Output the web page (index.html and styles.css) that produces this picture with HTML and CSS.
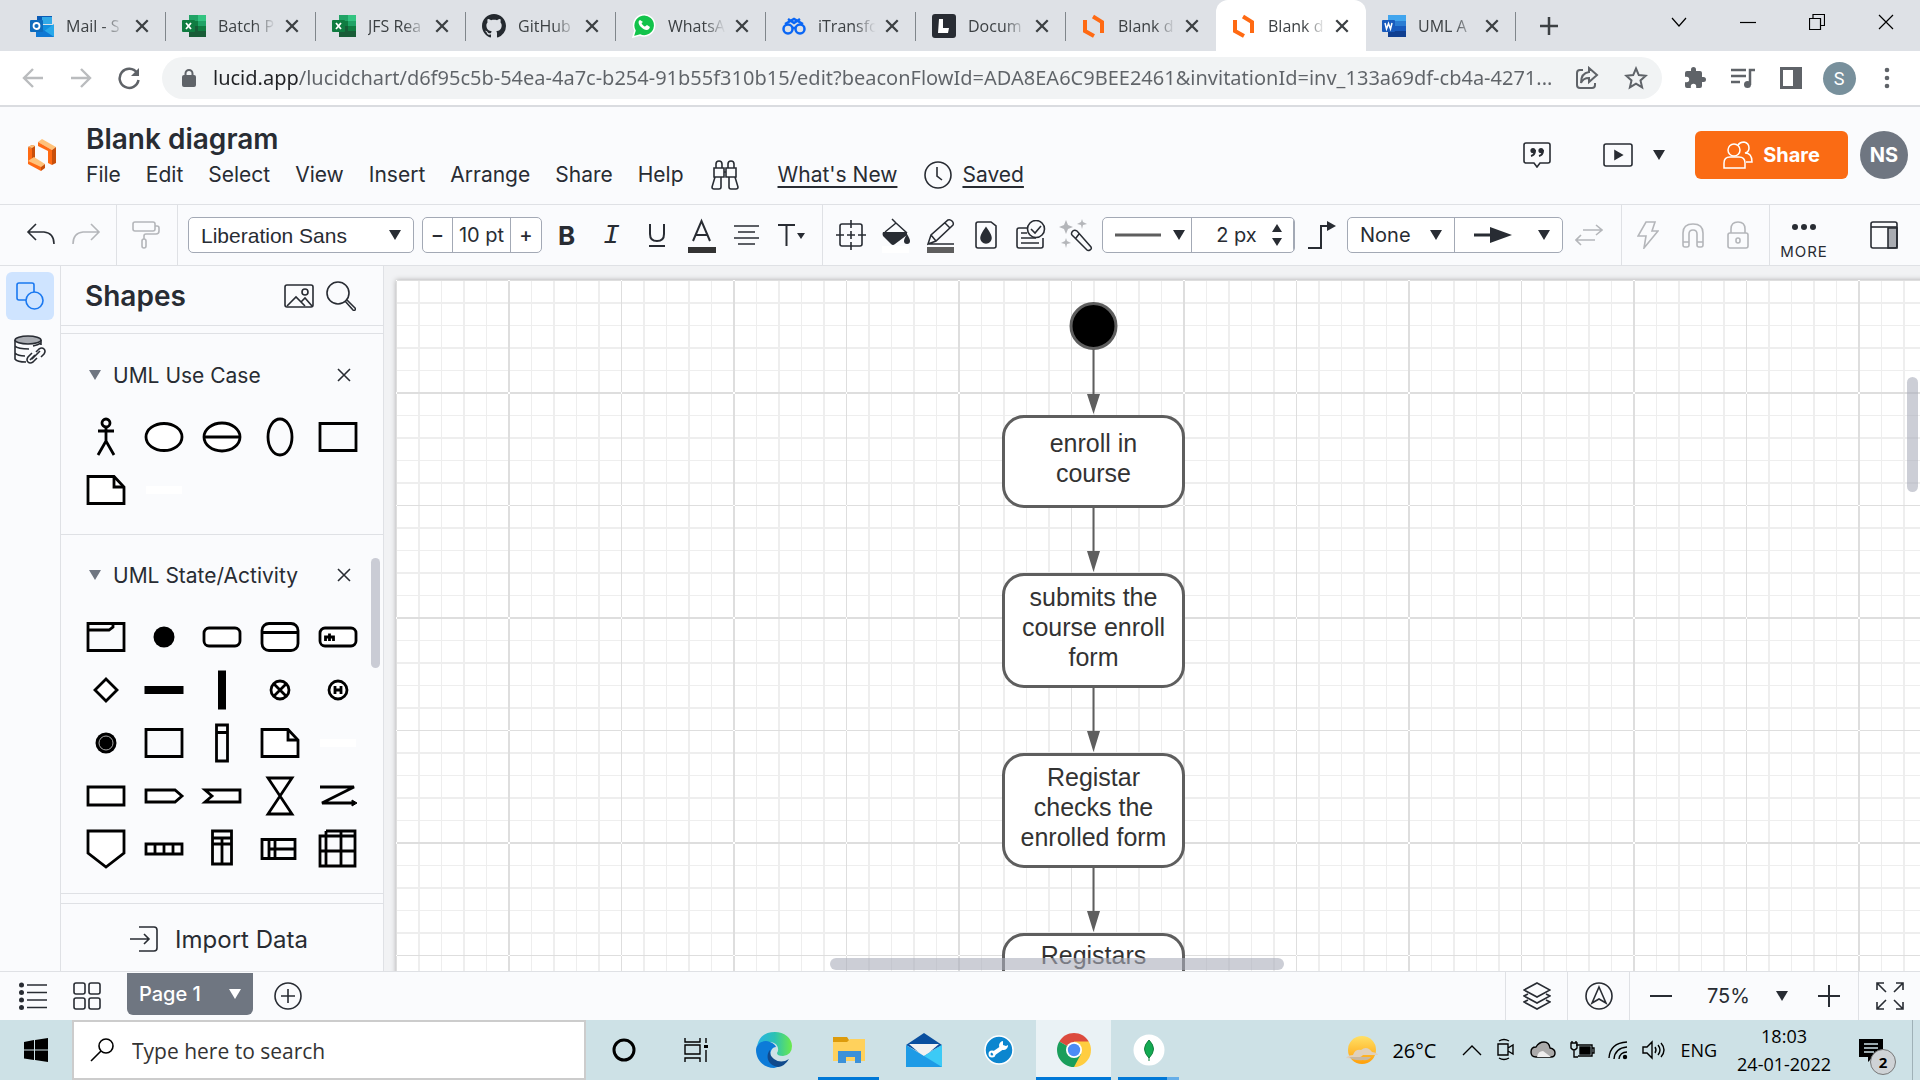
FILE: index.html
```html
<!DOCTYPE html>
<html lang="en">
<head>
<meta charset="utf-8">
<title>Blank diagram: Lucidchart</title>
<link rel="stylesheet" href="styles.css">
</head>
<body>
<svg class="defs" aria-hidden="true">
  <symbol id="x" viewBox="0 0 14 14"><path d="M2 2l10 10M12 2L2 12" fill="none" stroke="currentColor" stroke-width="2"/></symbol>
  <symbol id="caret" viewBox="0 0 12 10"><path d="M0 0h12L6 10z" fill="currentColor"/></symbol>
  <symbol id="excel" viewBox="0 0 24 24"><path d="M7 1h9v6H7z" fill="#21a366"/><path d="M16 1h8v6h-8z" fill="#33c481"/><path d="M7 7h9v5H7z" fill="#107c41"/><path d="M16 7h8v5h-8z" fill="#21a366"/><path d="M7 12h9v11H7z" fill="#185c37"/><path d="M16 12h8v5h-8z" fill="#107c41"/><path d="M16 17h8v6h-8z" fill="#185c37"/><rect y="6" width="13" height="12" rx="1" fill="#107c41"/><path d="M4 9l5 6M9 9l-5 6" stroke="#fff" stroke-width="1.8"/></symbol>
  <symbol id="lucid" viewBox="0 0 24 24"><path d="M3 6v11l9 5M11 2.500l9 5.500v11" fill="none" stroke="#ff6a13" stroke-width="4"/></symbol>
  <symbol id="note" viewBox="-22 -22 44 44"><path d="M-18-13.500H8L18-3v16.500h-36z" fill="#fff"/><path d="M8-13.500V-3h10"/></symbol>
</svg>

<header class="tabs">
  <a class="tab first" href="#"><svg viewBox="0 0 24 24"><path d="M7 2h15v8H7z" fill="#0a5bb5"/><path d="M12 3h10v7H12z" fill="#32a9e7"/><path d="M6 11h18v12H6z" fill="#1490df"/><path d="M24 10L13 18l11 5z" fill="#28a8ea"/><path d="M6 11l18 12H6z" fill="#0f78d4"/><rect y="6" width="13" height="12" rx="1" fill="#0f6cbd"/><circle cx="6.500" cy="12" r="3" fill="none" stroke="#fff" stroke-width="1.800"/></svg><span>Mail - S</span><svg class="close"><use href="#x"/></svg></a>
  <a class="tab" href="#"><svg><use href="#excel"/></svg><span>Batch P</span><svg class="close"><use href="#x"/></svg></a>
  <a class="tab" href="#"><svg><use href="#excel"/></svg><span>JFS Rea</span><svg class="close"><use href="#x"/></svg></a>
  <a class="tab" href="#"><svg viewBox="0 0 16 16"><path fill="#24292f" d="M8 0C3.580 0 0 3.580 0 8c0 3.540 2.290 6.530 5.470 7.590.4.070.550-.170.550-.380 0-.190-.010-.820-.010-1.490-2.010.370-2.530-.490-2.690-.940-.090-.230-.480-.940-.820-1.130-.280-.150-.680-.520-.010-.530.630-.010 1.080.580 1.230.820.720 1.210 1.870.870 2.330.660.070-.520.280-.870.510-1.070-1.780-.2-3.640-.890-3.640-3.950 0-.870.310-1.590.820-2.150-.080-.2-.360-1.020.080-2.120 0 0 .670-.210 2.200.820.640-.180 1.320-.270 2-.270s1.360.090 2 .270c1.530-1.040 2.200-.820 2.200-.820.440 1.100.160 1.920.080 2.120.510.560.820 1.270.820 2.150 0 3.070-1.870 3.750-3.650 3.950.290.250.540.730.540 1.480 0 1.070-.010 1.930-.010 2.200 0 .210.150.460.550.380A8.010 8.010 0 0 0 16 8c0-4.420-3.580-8-8-8z"/></svg><span>GitHub</span><svg class="close"><use href="#x"/></svg></a>
  <a class="tab" href="#"><svg viewBox="0 0 24 24"><path d="M1 23l2-6.500A10.500 10.500 0 1 1 8 21z" fill="#12c34b" stroke="#fff" stroke-width="1.500"/><path d="M8 6c-2 1-2 4 1 7s6 4 8 2l1-2-3-2-2 1.500c-1 0-3-2-3.500-3.500L11 8z" fill="#fff"/></svg><span>WhatsA</span><svg class="close"><use href="#x"/></svg></a>
  <a class="tab" href="#"><svg viewBox="0 0 24 24" fill="none" stroke="#0a66f5" stroke-width="2.500"><circle cx="6" cy="15" r="4.500"/><circle cx="18" cy="15" r="4.500"/><path d="M10 14h4M3 10l9-5 9 5M6 5l6 4 6-4"/></svg><span>iTransfo</span><svg class="close"><use href="#x"/></svg></a>
  <a class="tab" href="#"><svg viewBox="0 0 24 24"><rect width="24" height="24" rx="3" fill="#282c33"/><path d="M7 5h4v9h6l-1 5H6z" fill="#fff"/></svg><span>Docum</span><svg class="close"><use href="#x"/></svg></a>
  <a class="tab last" href="#"><svg><use href="#lucid"/></svg><span>Blank d</span><svg class="close"><use href="#x"/></svg></a>
  <a class="tab active" href="#"><svg><use href="#lucid"/></svg><span>Blank d</span><svg class="close"><use href="#x"/></svg></a>
  <a class="tab" href="#"><svg viewBox="0 0 24 24"><path d="M6 1h18v6H6z" fill="#41a5ee"/><path d="M6 7h18v5H6z" fill="#2b7cd3"/><path d="M6 12h18v5H6z" fill="#185abd"/><path d="M6 17h18v6H6z" fill="#103f91"/><rect y="6" width="13" height="12" rx="1" fill="#185abd"/><path d="M3 9l1.500 6 2-5.500 2 5.500L10 9" fill="none" stroke="#fff" stroke-width="1.500"/></svg><span>UML A</span><svg class="close"><use href="#x"/></svg></a>
  <button class="plain newtab" aria-label="New tab"><svg width="18" height="18" viewBox="0 0 18 18"><path d="M9 0v18M0 9h18" stroke="#3c4043" stroke-width="2.500"/></svg></button>
  <div class="winbtns">
    <button class="plain" aria-label="Search tabs"><svg viewBox="0 0 16 16"><path d="M1 4l7 8 7-8"/></svg></button>
    <button class="plain" aria-label="Minimise"><svg viewBox="0 0 16 16"><path d="M0 8.500h16"/></svg></button>
    <button class="plain" aria-label="Restore"><svg viewBox="0 0 16 16"><path d="M.5 4.500h11v11H.5zM4 4V.5h11.500v11H12"/></svg></button>
    <button class="plain" aria-label="Close"><svg viewBox="0 0 16 16"><path d="M1 1l14 14M15 1L1 15"/></svg></button>
  </div>
</header>

<nav class="address">
  <button class="plain" aria-label="Back"><svg width="24" height="24" viewBox="0 0 24 24" class="line grey"><path d="M22 12H4M12 3l-9 9 9 9"/></svg></button>
  <button class="plain" aria-label="Forward"><svg width="24" height="24" viewBox="0 0 24 24" class="line grey"><path d="M2 12h18M12 3l9 9-9 9"/></svg></button>
  <button class="plain" aria-label="Reload"><svg width="24" height="24" viewBox="0 0 24 24" fill="none" stroke="#5f6368" stroke-width="2.500"><path d="M20 7a9.500 9.500 0 1 0 1.500 7"/><path d="M22 2v8h-8z" fill="#5f6368" stroke="none"/></svg></button>
  <div class="omnibox">
    <svg width="14" height="18" viewBox="0 0 14 18"><rect y="6" width="14" height="12" rx="2" fill="#5f6368"/><path d="M3.500 7V4.500a3.500 3.500 0 0 1 7 0V7" fill="none" stroke="#5f6368" stroke-width="2"/></svg>
    <input aria-label="Address" value="lucid.app/lucidchart/d6f95c5b-54ea-4a7c-b254-91b55f310b15/edit?beaconFlowId=ADA8EA6C9BEE2461&amp;invitationId=inv_133a69df-cb4a-4271...">
    <button class="plain" aria-label="Share page"><svg width="24" height="24" viewBox="0 0 24 24" class="line chrome"><path d="M8 4H5q-3 0-3 3v12q0 3 3 3h12q3 0 3-3v-2M14 6V2l8 7-8 7v-4q-6 0-8 5 0-10 8-11z"/></svg></button>
    <button class="plain" aria-label="Bookmark"><svg width="24" height="24" viewBox="0 0 24 24" class="line chrome"><path d="M12 2.500l2.800 6.600 7 .6-5.300 4.700 1.600 7L12 17.600l-6.100 3.800 1.600-7-5.300-4.700 7-.6z"/></svg></button>
  </div>
  <div class="chrometools">
    <button class="plain" aria-label="Extensions"><svg width="24" height="24" viewBox="0 0 24 24"><path fill="#5f6368" d="M20.500 11H19V7a2 2 0 0 0-2-2h-4V3.500a2.500 2.500 0 0 0-5 0V5H4a2 2 0 0 0-2 2v3.800h1.500a2.700 2.700 0 0 1 0 5.400H2V20a2 2 0 0 0 2 2h3.800v-1.500a2.700 2.700 0 0 1 5.400 0V22H17a2 2 0 0 0 2-2v-4h1.500a2.500 2.500 0 0 0 0-5z"/></svg></button>
    <button class="plain" aria-label="Media"><svg width="26" height="24" viewBox="0 0 26 24"><path d="M1 4h15M1 10h15M1 16h9M20 19V4h5" fill="none" stroke="#5f6368" stroke-width="2.500"/><circle cx="17.500" cy="18.500" r="3.500" fill="#5f6368"/></svg></button>
    <button class="plain" aria-label="Side panel"><svg width="22" height="22" viewBox="0 0 22 22"><path d="M1.500 1.500h19v19h-19z" fill="none" stroke="#5f6368" stroke-width="3"/><path d="M13 1h8v20h-8z" fill="#5f6368"/></svg></button>
    <button class="plain"><span class="me">S</span></button>
    <button class="plain" aria-label="Menu"><svg width="6" height="22" viewBox="0 0 6 22" fill="#5f6368"><circle cx="3" cy="3" r="2.300"/><circle cx="3" cy="11" r="2.300"/><circle cx="3" cy="19" r="2.300"/></svg></button>
  </div>
</nav>

<section class="dochead">
  <svg class="logo" width="28" height="32" viewBox="0 0 28 32"><path d="M0 8l4 2v14l-4-2z" fill="#ff6a13"/><path d="M0 8l4-2 3 1v15l-3 2V10z" fill="#c94f0a"/><path d="M0 22l6-4 11 7-5 4z" fill="#ffc27a"/><path d="M0 22v3l13 7v-4z" fill="#ff6a13"/><path d="M13 28l4-3v4l-4 3z" fill="#c94f0a"/><path d="M0 8l4-2 3 1-3 2zM10 3l4-3 14 8-4 3z" fill="#ffc27a"/><path d="M10 3l14 8v15l-4-2V12L10 7z" fill="#ff6a13"/><path d="M24 11l4-3v16l-4 2z" fill="#c94f0a"/></svg>
  <div class="titles">
    <h1>Blank diagram</h1>
    <nav class="menu">
      <a href="#">File</a><a href="#">Edit</a><a href="#">Select</a><a href="#">View</a><a href="#">Insert</a><a href="#">Arrange</a><a href="#">Share</a><a href="#">Help</a>
      <button class="plain find" aria-label="Find"><svg width="28" height="30" viewBox="0 0 28 30" class="line"><path d="M3 17V8h10v9zM15 17V8h10v9zM5 8V4q0-3 3-3t3 3v4M17 8V4q0-3 3-3t3 3v4M4 17h6v10q0 2-2 2H3q-2 0-2-2zM24 17h-6v10q0 2 2 2h5q2 0 2-2zM13 12h2"/></svg></button>
      <a class="under news" href="#">What's New</a>
      <svg class="clock line" width="28" height="28" viewBox="0 0 28 28"><circle cx="14" cy="14" r="13"/><path d="M13 6v9l5 4"/></svg>
      <a class="under" href="#">Saved</a>
    </nav>
  </div>
  <div class="docactions">
    <button class="plain" aria-label="Comments"><svg width="28" height="26" viewBox="0 0 28 26" class="line"><path d="M3 1h22q2 0 2 2v16q0 2-2 2h-8l-3 4-3-4H3q-2 0-2-2V3q0-2 2-2z"/><path d="M8 14q4-1 4-6M16 14q4-1 4-6" stroke-width="2"/><circle cx="10" cy="8.500" r="1.800" fill="#282c33"/><circle cx="18" cy="8.500" r="1.800" fill="#282c33"/></svg></button>
    <button class="plain present" aria-label="Present"><svg width="30" height="24" viewBox="0 0 30 24" class="line"><rect x="1" y="1" width="28" height="22" rx="2"/><path d="M12 8l7 4-7 4z" fill="#282c33"/></svg></button>
    <button class="plain" aria-label="Present options"><svg class="caret"><use href="#caret"/></svg></button>
    <button class="share"><svg width="30" height="28" viewBox="0 0 30 28"><g fill="none" stroke="#fff" stroke-width="1.500"><circle cx="11" cy="9" r="6"/><path d="M1 27v-5q0-6 6-6h9q6 0 6 6v5zM15 4q2-3 6-3 5 1 5 6 0 4-4 5 7 0 7 9h-6"/></g></svg>Share</button>
    <button class="plain"><span class="avatar">NS</span></button>
  </div>
</section>

<section class="toolbar">
  <div class="grp hist">
    <button class="plain" aria-label="Undo"><svg width="30" height="24" viewBox="0 0 30 24" class="line"><path d="M10 1L2 9l8 8M2 9h16q10 1 10 12"/></svg></button>
    <button class="plain" aria-label="Redo"><svg width="30" height="24" viewBox="0 0 30 24" class="line pale"><path d="M20 1l8 8-8 8M28 9H12Q2 10 2 21"/></svg></button>
  </div>
  <div class="grp roller"><button class="plain" aria-label="Format painter"><svg width="28" height="28" viewBox="0 0 28 28" class="line pale"><rect x="1" y="1" width="22" height="9" rx="2"/><path d="M23 5h2q2 0 2 2v3q0 3-3 3H14q-2 0-2 2v3"/><rect x="10" y="18" width="4" height="9" rx="2"/></svg></button></div>
  <div class="grp text">
    <div class="pick font"><select aria-label="Font"><option>Liberation Sans</option></select><svg class="caret"><use href="#caret"/></svg></div>
    <div class="boxed size"><button aria-label="Smaller">−</button><input aria-label="Font size" value="10 pt"><button aria-label="Larger">+</button></div>
    <button class="plain b">B</button>
    <button class="plain i">I</button>
    <button class="plain" aria-label="Underline"><svg width="20" height="26" viewBox="0 0 20 26" class="line heavy"><path d="M3 2v10q0 7 7 7t7-7V2M2 24h16"/></svg></button>
    <button class="plain" aria-label="Text colour"><svg width="28" height="36" viewBox="0 0 28 36"><path d="M5 24L13.500 4 22 24M8 18h11" fill="none" stroke="#282c33" stroke-width="2"/><path d="M0 30h28v6H0z" fill="#333"/></svg></button>
    <button class="plain" aria-label="Align"><svg width="26" height="22" viewBox="0 0 26 22" class="line"><path d="M0 2h25M4 8h17M0 14h25M4 20h17"/></svg></button>
    <button class="plain" aria-label="Text options"><svg width="30" height="24" viewBox="0 0 30 24"><path d="M1 2h17M9.500 2v21" fill="none" stroke="#282c33" stroke-width="2"/><path d="M20 10h8l-4 6z" fill="#282c33"/></svg></button>
  </div>
  <div class="grp shape">
    <button class="plain" aria-label="Position"><svg width="30" height="30" viewBox="0 0 30 30" class="line"><rect x="4" y="4" width="22" height="22" rx="2"/><path d="M15 0v8M15 22v8M0 15h8M22 15h8M11 15h8M15 11v8"/></svg></button>
    <button class="plain" aria-label="Fill"><svg width="28" height="36" viewBox="0 0 28 36"><path d="M0 29h27v7H0z" fill="#fff"/><path d="M10 2l4 4L25 16M14 6L3 15" fill="none" stroke="#282c33" stroke-width="1.500"/><path d="M1 15h24v3L13 27Q11 29 9 27L1 19q-1-2 0-4z" fill="#282c33"/><path d="M25 17q3 5 3 7a3 3 0 0 1-6 0q0-2 3-7z" fill="#282c33"/></svg></button>
    <button class="plain" aria-label="Line colour"><svg width="28" height="36" viewBox="0 0 28 36"><path d="M1 27l3-9L21 3q2-1 4 1t1 4L9 24zM1 27h26M4 18l5 6M18 6l5 5" fill="none" stroke="#282c33" stroke-width="1.500"/><path d="M0 30h27v6H0z" fill="#5e5e5e"/></svg></button>
    <button class="plain" aria-label="Opacity"><svg width="22" height="28" viewBox="0 0 22 28" class="line"><path d="M3 1h13l5 4v20q0 2-2 2H3q-2 0-2-2V3q0-2 2-2z"/><path d="M11 7q5 7 5 10a5 5 0 0 1-10 0q0-3 5-10z" fill="#282c33"/></svg></button>
    <button class="plain" aria-label="Shape notes"><svg width="30" height="30" viewBox="0 0 30 30" class="line"><path d="M12 8H3q-2 0-2 2v16q0 2 2 2h22q2 0 2-2v-8M5 13h6M5 18h15M5 23h18"/><circle cx="20" cy="9" r="8.500"/><path d="M15 9l4 4 6-7"/></svg></button>
    <button class="plain" aria-label="Magic format"><svg width="34" height="34" viewBox="0 0 34 34"><path d="M7 2l2 5 5 2-5 2-2 5-2-5-5-2 5-2zM23 1l1 3 4 2-4 1-1 4-1-4-4-1 4-2zM7 20l1 3 4 2-4 1-1 4-1-4-4-1 4-2z" fill="#b4b6ba"/><path d="M13 14q2-3 5-1l14 16q1 2-1 3t-3 0L13 17q-1-1 0-3zM17 20l3-4" fill="none" stroke="#282c33" stroke-width="1.500"/></svg></button>
    <div class="boxed lines"><button aria-label="Line style"><svg width="46" height="4" viewBox="0 0 46 4"><path d="M0 2h46" stroke="#5e5e5e" stroke-width="3"/></svg><svg class="caret"><use href="#caret"/></svg></button><input aria-label="Line width" value="2 px"><svg class="steps" width="10" height="22" viewBox="0 0 10 22"><path d="M5 0l5 8H0zM0 14h10l-5 8z" fill="#282c33"/></svg></div>
    <button class="plain" aria-label="Line shape"><svg width="28" height="30" viewBox="0 0 28 30"><path d="M0 28h13V6h9" fill="none" stroke="#282c33" stroke-width="2"/><path d="M19 1l9 5-9 5z" fill="#282c33"/></svg></button>
    <div class="boxed ends"><div class="pick"><select aria-label="Line start"><option>None</option></select><svg class="caret"><use href="#caret"/></svg></div><button aria-label="Line end"><svg width="38" height="16" viewBox="0 0 38 16"><path d="M0 8h20" stroke="#282c33" stroke-width="3"/><path d="M16 0l22 8-22 8z" fill="#282c33"/></svg><svg class="caret"><use href="#caret"/></svg></button></div>
    <button class="plain" aria-label="Swap ends"><svg width="28" height="22" viewBox="0 0 28 22" class="line pale"><path d="M8 6h18M21 1l6 5-6 5M20 16H2M6 11l-5 5 5 5"/></svg></button>
  </div>
  <div class="grp act">
    <button class="plain" aria-label="Actions"><svg width="22" height="28" viewBox="0 0 22 28" class="line pale"><path d="M9 1h9l-3 9h6L7 27l2-12H1z"/></svg></button>
    <button class="plain" aria-label="Magnet"><svg width="22" height="26" viewBox="0 0 22 26" class="line pale"><path d="M1 23V11q0-9 10-9t10 9v12q0 2-2 2h-2q-2 0-2-2V12q0-4-4-4t-4 4v11q0 2-2 2H3q-2 0-2-2zM1 20h6M15 20h6"/></svg></button>
    <button class="plain" aria-label="Lock"><svg width="22" height="28" viewBox="0 0 22 28" class="line pale"><rect x="1" y="12" width="20" height="15" rx="2"/><path d="M4 12V8q0-7 7-7t7 7v4"/><rect x="9" y="17" width="4" height="5" rx="2"/></svg></button>
  </div>
  <div class="grp end">
    <button class="plain more"><svg width="26" height="6" viewBox="0 0 26 6" fill="#282c33"><circle cx="4" cy="3" r="3"/><circle cx="13" cy="3" r="3"/><circle cx="22" cy="3" r="3"/></svg>MORE</button>
    <button class="plain" aria-label="Toggle panel"><svg width="28" height="28" viewBox="0 0 28 28" class="line"><path d="M18 7h9v20h-9z" fill="#a9acb2"/><rect x="1" y="1" width="26" height="26" rx="2"/><path d="M1 6h26"/></svg></button>
  </div>
</section>

<main class="work">
  <aside class="rail">
    <button class="plain on" aria-label="Shapes"><svg width="28" height="28" viewBox="0 0 28 28" fill="none" stroke="#1a78f0" stroke-width="1.600"><path d="M10 18H3q-2 0-2-2V3q0-2 2-2h13q2 0 2 2v7"/><circle cx="18.500" cy="18.500" r="8.500"/></svg></button>
    <button class="plain" aria-label="Data"><svg width="32" height="30" viewBox="0 0 32 30" class="line"><path d="M1 5v19q2 3 11 3M27 5v5M1 11q3 3 14 3M1 18q3 3 10 3M27 5v3q-3 2-8 3"/><ellipse cx="14" cy="5" rx="13" ry="4" fill="#a9acb2"/><path d="M18 24l8-8M22 17l3-3q3-2 5 0t0 5l-3 3M21 20l-5 5M18 18l-4 4q-2 3 0 5t5 0l4-4"/></svg></button>
  </aside>
  <aside class="panel">
    <div class="phead"><h2>Shapes</h2>
      <button class="plain" aria-label="Images"><svg width="30" height="24" viewBox="0 0 30 24" class="line"><rect x="1" y="1" width="28" height="22" rx="2"/><circle cx="21" cy="8" r="3"/><path d="M3 22l9-9 9 9M17 18l4-4 7 8"/></svg></button>
      <button class="plain" aria-label="Search shapes"><svg width="30" height="30" viewBox="0 0 30 30" class="line"><circle cx="12" cy="12" r="11"/><path d="M19 20l8 9q1 1 2 0t0-2l-8-8"/></svg></button>
    </div>
    <div class="libs">
      <section class="lib">
        <h3><svg class="caret"><use href="#caret"/></svg>UML Use Case<button class="plain" aria-label="Close library"><svg width="16" height="16" viewBox="0 0 16 16" class="line"><path d="M2 2l12 12M14 2L2 14"/></svg></button></h3>
        <div class="shapes">
          <svg viewBox="-22 -22 44 44"><circle cy="-14" r="4"/><path d="M-8-6H8M0-10V4M-8 18L0 4l8 14"/></svg>
          <svg viewBox="-22 -22 44 44"><ellipse rx="18" ry="13.500" fill="#fff"/></svg>
          <svg viewBox="-22 -22 44 44"><ellipse rx="18" ry="14" fill="#fff"/><path d="M-18 0h36"/></svg>
          <svg viewBox="-22 -22 44 44"><ellipse rx="12" ry="18"/></svg>
          <svg viewBox="-22 -22 44 44"><path d="M-18-13.500h36v27h-36z"/></svg>
          <svg><use href="#note"/></svg>
          <svg viewBox="-22 -22 44 44"><path d="M-18-4h36v8h-36z" fill="#fff" stroke="none"/></svg>
        </div>
      </section>
      <section class="lib">
        <h3><svg class="caret"><use href="#caret"/></svg>UML State/Activity<button class="plain" aria-label="Close library"><svg width="16" height="16" viewBox="0 0 16 16" class="line"><path d="M2 2l12 12M14 2L2 14"/></svg></button></h3>
        <div class="shapes">
          <svg viewBox="-22 -22 44 44"><path d="M-18-13.500h36v27h-36zM-18-7H3l4-3v-3"/></svg>
          <svg viewBox="-22 -22 44 44"><circle r="10.500" fill="#000" stroke="none"/></svg>
          <svg viewBox="-22 -22 44 44"><rect x="-18" y="-9" width="36" height="18" rx="5" fill="#fff"/></svg>
          <svg viewBox="-22 -22 44 44"><rect x="-18" y="-13.500" width="36" height="27" rx="7" fill="#fff"/><path d="M-18-4.500h36"/></svg>
          <svg viewBox="-22 -22 44 44"><rect x="-18" y="-9" width="36" height="18" rx="5" fill="#fff"/><path d="M-12.500 4V0h8v4M-8.500-3.500V4"/></svg>
          <svg viewBox="-22 -22 44 44"><path d="M0-11L11 0 0 11-11 0z" fill="#fff"/></svg>
          <svg viewBox="-22 -22 44 44"><path d="M-19.500-4h39v8h-39z" fill="#000" stroke="none"/></svg>
          <svg viewBox="-22 -22 44 44"><path d="M-4-19.500h8v39h-8z" fill="#000" stroke="none"/></svg>
          <svg viewBox="-22 -22 44 44"><circle r="9" fill="#fff"/><path d="M-6-6L6 6M6-6L-6 6"/></svg>
          <svg viewBox="-22 -22 44 44"><circle r="9" fill="#fff"/><path d="M-3-4v8M3-4v8M-3 0h6"/></svg>
          <svg viewBox="-22 -22 44 44"><circle r="10.500" fill="#000" stroke="none"/><circle r="7" stroke="#aaa" stroke-width="1"/></svg>
          <svg viewBox="-22 -22 44 44"><path d="M-18-13.500h36v27h-36z"/></svg>
          <svg viewBox="-22 -22 44 44"><path d="M-5.500-18h11v36h-11zM-5.500-10.500h11"/></svg>
          <svg><use href="#note"/></svg>
          <svg viewBox="-22 -22 44 44"><path d="M-18-4h36v8h-36z" fill="#fff" stroke="none"/></svg>
          <svg viewBox="-22 -22 44 44"><path d="M-18-9h36V9h-36z" fill="#fff"/></svg>
          <svg viewBox="-22 -22 44 44"><path d="M-18-6h29l7 6-7 6h-29z" fill="#fff"/></svg>
          <svg viewBox="-22 -22 44 44"><path d="M-17-6h35V6h-35l7-6z" fill="#fff"/></svg>
          <svg viewBox="-22 -22 44 44"><path d="M-12-18h24l-24 36h24z" fill="#fff"/></svg>
          <svg viewBox="-22 -22 44 44"><path d="M-18-9h34L-16 7h32"/><path d="M14 4l5 3-5 3z" fill="#000" stroke-width="1"/></svg>
          <svg viewBox="-22 -22 44 44"><path d="M-18-18h36V4L0 18-18 4z" fill="#fff"/></svg>
          <svg viewBox="-22 -22 44 44"><path d="M-18-5h36V5h-36zM-9-5V5M0-5V5M9-5V5" fill="#fff"/></svg>
          <svg viewBox="-22 -22 44 44"><path d="M-9.500-18h19v33h-19zM-9.500-11h19M-9.500-5h19M0-11v26"/></svg>
          <svg viewBox="-22 -22 44 44"><path d="M-18-9.500h33v19h-33zM-11-9.500v19M-5-9.500v19M-11 0h26"/></svg>
          <svg viewBox="-22 -22 44 44"><path d="M-12-18h29v35h-35v-30h35M-12-18v35M3-18v35M-18 2h35"/></svg>
        </div>
      </section>
      <i class="bar"></i>
    </div>
    <button class="import"><svg width="28" height="26" viewBox="0 0 28 26" class="line"><path d="M9 1h15q3 0 3 3v18q0 3-3 3H9M0 13h19M14 8l5 5-5 5"/></svg>Import Data</button>
  </aside>
  <div class="canvas">
    <svg class="grid" width="100%" height="100%">
      <defs><pattern id="grid" width="225" height="225" patternUnits="userSpaceOnUse">
        <g fill="#eeeeee"><path d="M22 0h2v225h-2zM45 0h1v225h-1zM67 0h2v225h-2zM90 0h1v225h-1zM135 0h1v225h-1zM157 0h2v225h-2zM180 0h1v225h-1zM202 0h2v225h-2z"/><path d="M0 22v2h225v-2zM0 45v1h225v-1zM0 67v2h225v-2zM0 90v1h225v-1zM0 135v1h225v-1zM0 157v2h225v-2zM0 180v1h225v-1zM0 202v2h225v-2z"/></g>
        <path d="M0 0h1v225H0zM112 0h2v225h-2zM0 0v1h225V0zM0 112v2h225v-2z" fill="#dedede"/>
      </pattern></defs>
      <rect width="100%" height="100%" fill="url(#grid)"/>
    </svg>
    <svg class="flow" width="183" height="691" viewBox="0 0 183 691">
      <g stroke="#5e5e5e" stroke-width="2"><path d="M91.500 69v48M91.500 226v50M91.500 407v50M91.500 587v50"/></g>
      <path d="M85 114h13l-6.500 20zM85 271h13l-6.500 21zM85 451h13l-6.500 21zM85 631h13l-6.500 21z" fill="#5e5e5e"/>
      <circle cx="91.500" cy="46" r="22.500" stroke="#5e5e5e" stroke-width="3"/>
    </svg>
    <div class="node n1">enroll in<br>course</div>
    <div class="node n2">submits the<br>course enroll<br>form</div>
    <div class="node n3">Registar<br>checks the<br>enrolled form</div>
    <div class="node n4">Registars</div>
    <i class="bar v"></i><i class="bar h"></i>
  </div>
</main>

<footer class="pages">
  <button class="plain" aria-label="Outline"><svg width="28" height="28" viewBox="0 0 28 28" class="line"><path d="M8 3h20M8 10.500h20M8 18h20M8 25.500h20"/><g fill="#282c33" stroke="none"><circle cx="2.500" cy="3" r="2.500"/><circle cx="2.500" cy="10.500" r="2.500"/><circle cx="2.500" cy="18" r="2.500"/><circle cx="2.500" cy="25.500" r="2.500"/></g></svg></button>
  <button class="plain" aria-label="Pages"><svg width="28" height="28" viewBox="0 0 28 28" class="line"><rect x="1" y="1" width="11" height="11" rx="2"/><rect x="16" y="1" width="11" height="11" rx="2"/><rect x="1" y="16" width="11" height="11" rx="2"/><rect x="16" y="16" width="11" height="11" rx="2"/></svg></button>
  <button class="page">Page 1<svg class="caret"><use href="#caret"/></svg></button>
  <button class="plain" aria-label="Add page"><svg width="28" height="28" viewBox="0 0 28 28" class="line"><circle cx="14" cy="14" r="13"/><path d="M14 7v14M7 14h14"/></svg></button>
  <div class="zoom">
    <button class="plain cell" aria-label="Layers"><svg width="28" height="28" viewBox="0 0 28 28" class="line"><path d="M14 1l13 7-13 7L1 8zM5 12l-4 2 13 7 13-7-4-2M5 18l-4 2 13 7 13-7-4-2"/></svg></button>
    <button class="plain cell" aria-label="Navigator"><svg width="28" height="28" viewBox="0 0 28 28" class="line"><circle cx="14" cy="14" r="13"/><path d="M14 5l7 16-7-4-7 4z"/></svg></button>
    <div class="zoomset">
      <button class="plain" aria-label="Zoom out"><svg width="22" height="22" viewBox="0 0 22 22" class="line heavy"><path d="M0 11h22"/></svg></button>
      <div class="pick pct"><select aria-label="Zoom"><option>75%</option></select><svg class="caret"><use href="#caret"/></svg></div>
      <button class="plain" aria-label="Zoom in"><svg width="22" height="22" viewBox="0 0 22 22" class="line heavy"><path d="M0 11h22M11 0v22"/></svg></button>
    </div>
    <button class="plain cell" aria-label="Full screen"><svg width="28" height="28" viewBox="0 0 28 28" class="line"><path d="M1 8V1h7M1 1l9 9M20 1h7v7M27 1l-9 9M1 20v7h7M1 27l9-9M20 27h7v-7M27 27l-9-9"/></svg></button>
  </div>
</footer>

<footer class="taskbar">
  <button class="plain start" aria-label="Start"><svg width="24" height="24" viewBox="0 0 24 24"><path d="M0 4l10-2v9.500H0zM11 2l13-2v11.500H11zM0 12.500h10V22L0 20.500zM11 12.500h13V24l-13-2z"/></svg></button>
  <label class="search"><svg width="24" height="24" viewBox="0 0 24 24" fill="none" stroke="#000" stroke-width="1.600"><circle cx="16" cy="8" r="7"/><path d="M11 13L1 23"/></svg><input aria-label="Search" placeholder="Type here to search"></label>
  <button class="plain app" aria-label="Cortana"><svg width="24" height="24" viewBox="0 0 24 24"><circle cx="12" cy="12" r="10" fill="none" stroke="#000" stroke-width="3"/></svg></button>
  <button class="plain app" aria-label="Task view"><svg width="30" height="24" viewBox="0 0 30 24" fill="none" stroke="#000" stroke-width="1.400"><path d="M1 0v4h15V0M1 7h15v9H1zM1 24v-4h15v4M22 0v5M22 12v12"/><path d="M20 7h4v3h-4z" fill="#000" stroke="none"/></svg></button>
  <button class="plain app" aria-label="Edge"><svg width="36" height="36" viewBox="0 0 36 36"><defs><linearGradient id="e1" x1="0" x2="1"><stop stop-color="#27b3e6"/><stop offset=".5" stop-color="#2cc1b4"/><stop offset="1" stop-color="#6bea4b"/></linearGradient></defs><path d="M1 14Q4 0 19 0c9 0 17 6 17 14q0 9-9 10c-4 0-6-1-6-3 3-4 0-11-7-11Q4 10 1 14z" fill="url(#e1)"/><path d="M0 18c0-7 8-11 14-8q5 2 6 5c-5 0-8 8-3 14l8 5-7 2C8 36 0 28 0 18z" fill="#0c7bd8"/><path d="M14 18c-4 4-4 15 8 17q7-1 11-8-8 5-15 0-5-4-4-9z" fill="#114a8c"/></svg></button>
  <button class="plain app open" aria-label="Explorer"><svg width="34" height="30" viewBox="0 0 34 30"><path d="M1 2h14l2 3v6H1z" fill="#dd9b0c"/><path d="M1 7h14l3-3h15v22H1z" fill="#ffd15c"/><path d="M6 28V16h23v12h-6v-6h-9v6z" fill="#3b91d9"/></svg></button>
  <button class="plain app" aria-label="Mail"><svg width="36" height="34" viewBox="0 0 36 34"><path d="M0 12L18 0l18 12-18 10z" fill="#0a4f9f"/><path d="M3 11h30L18 24z" fill="#f2f2f2"/><path d="M0 12l18 11L36 12v22H0z" fill="#1e9be6"/><path d="M36 12v22L18 23z" fill="#3ccaf6"/></svg></button>
  <button class="plain app" aria-label="Tools"><svg width="30" height="30" viewBox="0 0 30 30"><circle cx="15" cy="15" r="14" fill="#0c86cf" stroke="#fff" stroke-width="1.500"/><path d="M9 19L19 12" stroke="#fff" stroke-width="4"/><circle cx="8" cy="19" r="2.500" fill="none" stroke="#fff" stroke-width="2"/><path d="M24 10a4.500 4.500 0 1 1-5-4v4l3 1z" fill="#fff"/></svg></button>
  <button class="plain app open focus" aria-label="Chrome"><svg width="34" height="34" viewBox="0 0 34 34"><path d="M17 17L2.300 8.500A17 17 0 0 1 31.700 8.500z" fill="#dc4b3e"/><path d="M17 17V8.500h14.700A17 17 0 0 1 17 34z" fill="#ffcd40"/><path d="M17 17l7 4-7 13A17 17 0 0 1 2.300 8.500z" fill="#1a9e5b"/><circle cx="17" cy="17" r="8" fill="#fff"/><circle cx="17" cy="17" r="6.200" fill="#4c8bf5"/></svg></button>
  <button class="plain app open group" aria-label="Compass"><svg width="32" height="32" viewBox="0 0 32 32"><circle cx="16" cy="16" r="15.500" fill="#fff"/><path d="M16 6q9 9 0 18-9-9 0-18zM16 23v4" fill="#13aa52" stroke="#13803f"/></svg></button>
  <div class="tray">
    <button class="plain weather"><svg width="34" height="30" viewBox="0 0 34 30"><defs><linearGradient id="sun" x2="0" y2="1"><stop stop-color="#ffe066"/><stop offset="1" stop-color="#ff9f0a"/></linearGradient></defs><circle cx="17" cy="15" r="14" fill="url(#sun)"/><path d="M8 20q2-6 8-5 6-5 11 2 6 1 6 3H18q-3 4-17 3 2-3 7-3z" fill="#dfd0bd"/><path d="M4 22h22q-3 4-8 3-9 1-14-3z" fill="#c8b8a2"/></svg>26°C</button>
    <svg class="up" width="20" height="12" viewBox="0 0 20 12"><path d="M1 11l9-9 9 9"/></svg>
    <svg width="20" height="24" viewBox="0 0 20 24"><path d="M2 6h10v11H2zM12 10l5-3v9l-5-3M3 3q5-3 10 0M3 20q5 3 10 0"/></svg>
    <svg width="26" height="18" viewBox="0 0 26 18"><path d="M6 16q-5 0-5-5t5-5q3-5 8-5t6 6q5 1 5 5t-4 4z" fill="#aaa"/><path d="M7 16q1-6 6-6l8 6z" fill="#eee" stroke="none"/></svg>
    <svg width="24" height="18" viewBox="0 0 24 18"><path d="M6 4h16v11H8M22 7h2v5h-2M1 2h6v5q-3 4-6 0zM2 0v2M6 0v2M4 9v7h4"/><path d="M10 6h10v7H10z" fill="#000"/></svg>
    <svg width="20" height="20" viewBox="0 0 20 20"><path d="M1 18Q2 3 19 2M6 19Q7 8 19 7M11 19q1-7 8-7"/><circle cx="17" cy="17" r="1.500" fill="#000"/></svg>
    <svg width="24" height="20" viewBox="0 0 24 20"><path d="M1 7h4l5-5v16l-5-5H1zM13 7q2 3 0 6M16 5q4 5 0 10M19 3q6 7 0 14"/></svg>
    <span>ENG</span>
    <time>18:03<br>24-01-2022</time>
    <button class="plain notes" aria-label="Notifications"><svg width="24" height="24" viewBox="0 0 24 24"><path d="M0 1h24v18H14l-5 5v-5H0z" fill="#000"/><path d="M5 6h14M5 10h14M5 14h10" stroke="#cde1e6"/></svg><b>2</b></button>
  </div>
</footer>
</body>
</html>
```
FILE: styles.css
```css
* { box-sizing: border-box; }
body {
  margin: 0;
  height: 100vh;
  display: flex;
  flex-direction: column;
  overflow: hidden;
  font-family: Inter, sans-serif;
  font-size: 20px;
  color: #282c33;
  background: #fafbfd;
}
button, input, select { font: inherit; color: inherit; margin: 0; }
a { color: inherit; text-decoration: none; }
svg { display: block; flex: none; }
.defs { position: absolute; width: 0; height: 0; }
.plain { display: flex; align-items: center; justify-content: center; border: 0; padding: 0; background: none; }
.line { fill: none; stroke: #282c33; stroke-width: 1.6; }
.pale { stroke: #b4b6ba; }
.grey { stroke: #babcbe; stroke-width: 2.4; }
.chrome { stroke: #5f6368; stroke-width: 2; }
.heavy { stroke-width: 2; }
.caret { width: 12px; height: 10px; }

/* browser tabs */
.tabs { height: 51px; flex: none; display: flex; padding-left: 14px; background: #dee1e6; font: 16px "Open Sans", sans-serif; color: #3c4043; }
.tab { position: relative; width: 150px; padding: 0 16px; display: flex; align-items: center; }
.tab.first { width: 152px; }
.tab svg { width: 24px; height: 24px; }
.tab span { width: 60px; margin-left: 12px; white-space: nowrap; mask-image: linear-gradient(to right, #000 60%, transparent 96%); }
.tab .close { width: 16px; height: 16px; margin-left: auto; }
.tab::after { content: ""; position: absolute; right: 0; top: 12px; width: 1px; height: 29px; background: #80868b; }
.tab.active { background: #fff; border-radius: 12px 12px 0 0; }
.tab.active::after, .tab.last::after { display: none; }
.newtab { width: 66px; }
.winbtns { margin-left: auto; display: flex; height: 43px; }
.winbtns .plain { width: 69px; }
.winbtns svg { width: 16px; height: 16px; fill: none; stroke: #000; stroke-width: 1.2; }

/* address bar */
.address { height: 56px; flex: none; display: flex; align-items: center; padding: 0 9px; background: #fff; border-bottom: 2px solid #dadce0; }
.address > .plain { width: 48px; }
.omnibox { flex: 1; height: 42px; margin-left: 9px; padding: 0 2px 0 20px; display: flex; align-items: center; border-radius: 21px; background: #f1f3f4; }
.omnibox input { flex: 1; min-width: 0; margin-left: 17px; padding: 0; border: 0; font: 20px/30px "Noto Sans", sans-serif; color: transparent; background: linear-gradient(to right, #202124 85px, #5f6368 85px) text; }
.omnibox .plain { width: 49px; }
.chrometools { display: flex; margin-left: 9px; }
.chrometools .plain { width: 48px; }
.me { width: 33px; height: 33px; border-radius: 50%; background: #78909c; color: #fff; font: 18px/33px Roboto, sans-serif; }

/* document header */
.dochead { height: 97px; flex: none; display: flex; align-items: center; padding: 0 12px 2px 28px; }
.titles { margin-left: 30px; padding-top: 4px; }
h1 { margin: 0; font-size: 28px; line-height: 36px; font-weight: 600; }
.menu { display: flex; align-items: center; gap: 25px; height: 36px; font-size: 21px; line-height: 28px; white-space: nowrap; }
.under { text-decoration: underline; text-underline-offset: 4px; text-decoration-thickness: 2px; }
.find { margin: 0 14px 0 2px; }
.clock { margin: 0 -15px 0 2px; }
.docactions { margin-left: auto; display: flex; align-items: center; }
.present { margin: 0 20px 0 52px; }
.share { display: flex; align-items: center; justify-content: center; gap: 10px; width: 153px; height: 48px; margin: 0 12px 0 30px; border: 0; border-radius: 6px; background: #fa6b14; color: #fff; font-weight: 700; }
.avatar { width: 48px; height: 48px; border-radius: 50%; background: #6f7681; color: #fff; font-weight: 700; line-height: 48px; }

/* toolbar */
.toolbar { height: 62px; flex: none; display: flex; border: solid #dfe1e5; border-width: 1px 0; }
.grp { display: flex; align-items: center; border-right: 1px solid #dfe1e5; }
.grp > .plain { width: 45px; flex: none; height: 60px; }
.hist { width: 117px; padding-left: 18px; }
.roller { width: 61px; padding-left: 6px; }
.text { width: 645px; padding-left: 10px; }
.shape { width: 799px; padding-left: 5px; }
.act { width: 148px; padding-left: 3px; }
.end { flex: 1; border: 0; padding: 0 14px 0 4px; justify-content: space-between; }
.pick { position: relative; display: flex; align-items: center; }
.pick select { appearance: none; width: 100%; height: 100%; padding: 0 12px; border: 0; background: none; }
.pick .caret { position: absolute; right: 12px; pointer-events: none; }
.font { width: 226px; height: 36px; border: 1px solid #a3a9b5; border-radius: 5px; background: #fff; font-family: "Liberation Sans", sans-serif; font-size: 21px; }
.boxed { display: flex; height: 36px; border: 1px solid #a3a9b5; border-radius: 5px; background: #fff; overflow: hidden; }
.boxed > * { border: 0; border-right: 1px solid #a3a9b5; background: none; padding: 0; }
.boxed > :last-child { border-right: 0; }
.boxed > button { display: flex; align-items: center; justify-content: center; }
.boxed input { min-width: 0; flex: 1; text-align: center; }
.size { width: 120px; margin: 0 2px 0 8px; }
.size button { width: 30px; font-weight: 500; }
.toolbar .b { font-size: 26px; font-weight: 700; }
.toolbar .i { font: italic 28px "Liberation Mono", monospace; }
.lines { width: 193px; margin: 0 4px; position: relative; }
.lines button { width: 89px; gap: 12px; padding-left: 6px; }
.lines input { padding-right: 12px; }
.steps { position: absolute; right: 12px; top: 6px; }
.ends { width: 216px; margin: 0 3px; }
.ends > * { width: 50%; }
.ends button { gap: 26px; padding-left: 6px; }
.toolbar .more { width: 60px; flex-direction: column; gap: 12px; padding-top: 14px; font-size: 15px; letter-spacing: 1px; }

/* work area */
.work { flex: 1; min-height: 0; display: flex; }
.rail { width: 61px; flex: none; padding: 6px; border-right: 1px solid #dfe1e5; display: flex; flex-direction: column; gap: 6px; }
.rail .plain { width: 48px; height: 48px; border-radius: 6px; }
.rail .on { background: #cfe4ff; }
.panel { width: 323px; flex: none; display: flex; flex-direction: column; border-right: 1px solid #dfe1e5; }
.phead { height: 60px; display: flex; align-items: center; gap: 12px; padding: 0 27px 0 24px; border-bottom: 1px solid #dfe1e5; }
h2 { margin: 0 auto 0 0; font-size: 28px; font-weight: 600; }
.libs { flex: 1; min-height: 0; margin-top: 7px; border-top: 1px solid #dfe1e5; position: relative; overflow: hidden; }
.lib { height: 201px; padding: 19px 16px 0; border-bottom: 1px solid #dfe1e5; }
.lib + .lib { height: 359px; padding-top: 18px; }
h3 { display: flex; align-items: center; height: 44px; margin: 0 0 13px; padding: 0 15px 0 12px; font-size: 21px; font-weight: 400; white-space: nowrap; }
h3 .caret { margin-right: 12px; color: #6f7681; }
h3 .plain { margin-left: auto; }
.shapes { display: grid; grid-template-columns: repeat(5, 58px); grid-auto-rows: 53px; place-items: center; fill: none; stroke: #000; stroke-width: 2.8; }
.shapes svg { width: 44px; height: 44px; }
.bar { position: absolute; border-radius: 6px; background: rgba(170, 174, 186, .6); }
.libs .bar { right: 3px; top: 224px; width: 9px; height: 110px; }
.import { height: 68px; margin-top: 9px; border: 0; border-top: 1px solid #dfe1e5; background: none; display: flex; align-items: center; justify-content: center; gap: 17px; font-size: 24px; padding: 3px 6px 0 0; }
.canvas { flex: 1; position: relative; overflow: hidden; background: #f1f2f4; }
.grid { position: absolute; left: 12px; top: 14px; background: #fff; box-shadow: 0 0 5px #aaa; }
.flow { position: absolute; left: 618px; top: 14px; }
.node { position: absolute; left: 618px; width: 183px; border: 3px solid #5e5e5e; border-radius: 22px; background: #fff; color: #333; text-align: center; font: 25px/30px "Liberation Sans", sans-serif; padding-top: 6px; }
.n1 { top: 149px; height: 93px; padding-top: 10px; }
.n2 { top: 307px; height: 115px; }
.n3 { top: 487px; height: 115px; }
.n4 { top: 667px; height: 115px; padding-top: 4px; }
.v { right: 2px; top: 111px; width: 11px; height: 115px; }
.h { left: 446px; bottom: 1px; width: 454px; height: 12px; }

/* page bar */
.pages { height: 49px; flex: none; display: flex; align-items: center; border-top: 1px solid #dfe1e5; padding-left: 19px; }
.pages > .plain { width: 28px; margin-right: 26px; }
.page { display: flex; align-items: center; justify-content: space-between; width: 126px; height: 42px; margin: 0 21px 4px 0; padding: 0 12px; border: 0; border-radius: 0 0 6px 6px; background: #6f7681; color: #fff; font-weight: 500; }
.zoom { margin-left: auto; display: flex; height: 48px; }
.cell { width: 62px; border-left: 1px solid #dfe1e5; }
.zoomset { width: 229px; border-left: 1px solid #dfe1e5; display: flex; align-items: center; padding: 0 18px 0 20px; justify-content: space-between; }
.pct { width: 110px; height: 40px; }
.pct select { padding-left: 17px; }

/* taskbar */
.taskbar { height: 60px; flex: none; display: flex; background: #cde1e6; color: #000; font-family: "Open Sans", sans-serif; }
.start { width: 72px; }
.search { width: 514px; display: flex; align-items: center; padding-left: 16px; border: 2px solid #ccc; background: #fff; }
.search input { flex: 1; margin-left: 18px; padding: 2px 0 0; border: 0; font-size: 21px; }
.search input::placeholder { color: #333; opacity: 1; }
.app { width: 75px; position: relative; }
.open::after { content: ""; position: absolute; left: 7px; right: 7px; bottom: 0; height: 3px; background: #0078d7; }
.focus { background: #eaf2f5; }
.focus::after { left: 0; right: 0; }
.group::after { background: linear-gradient(to right, #0078d7 49px, #66aee8 49px); }
.tray { margin: 0 7px 0 auto; display: flex; align-items: center; font-size: 18px; padding-right: 29px; gap: 14px; border-right: 1px solid #9fb1b7; fill: none; stroke: #000; stroke-width: 1.4; white-space: nowrap; }
.tray svg { overflow: visible; }
.weather { gap: 13px; font-size: 20px; margin-right: 12px; stroke: none; }
.tray span, .tray time { stroke: none; }
.tray time { line-height: 28px; text-align: center; margin: 0 14px 0 6px; font-size: 18px; }
.notes { position: relative; stroke: none; }
.notes b { position: absolute; left: 11px; top: 11px; width: 26px; height: 26px; border: 1px solid #777; border-radius: 50%; background: #cfd3d6; font-size: 15px; line-height: 24px; text-align: center; }
```
